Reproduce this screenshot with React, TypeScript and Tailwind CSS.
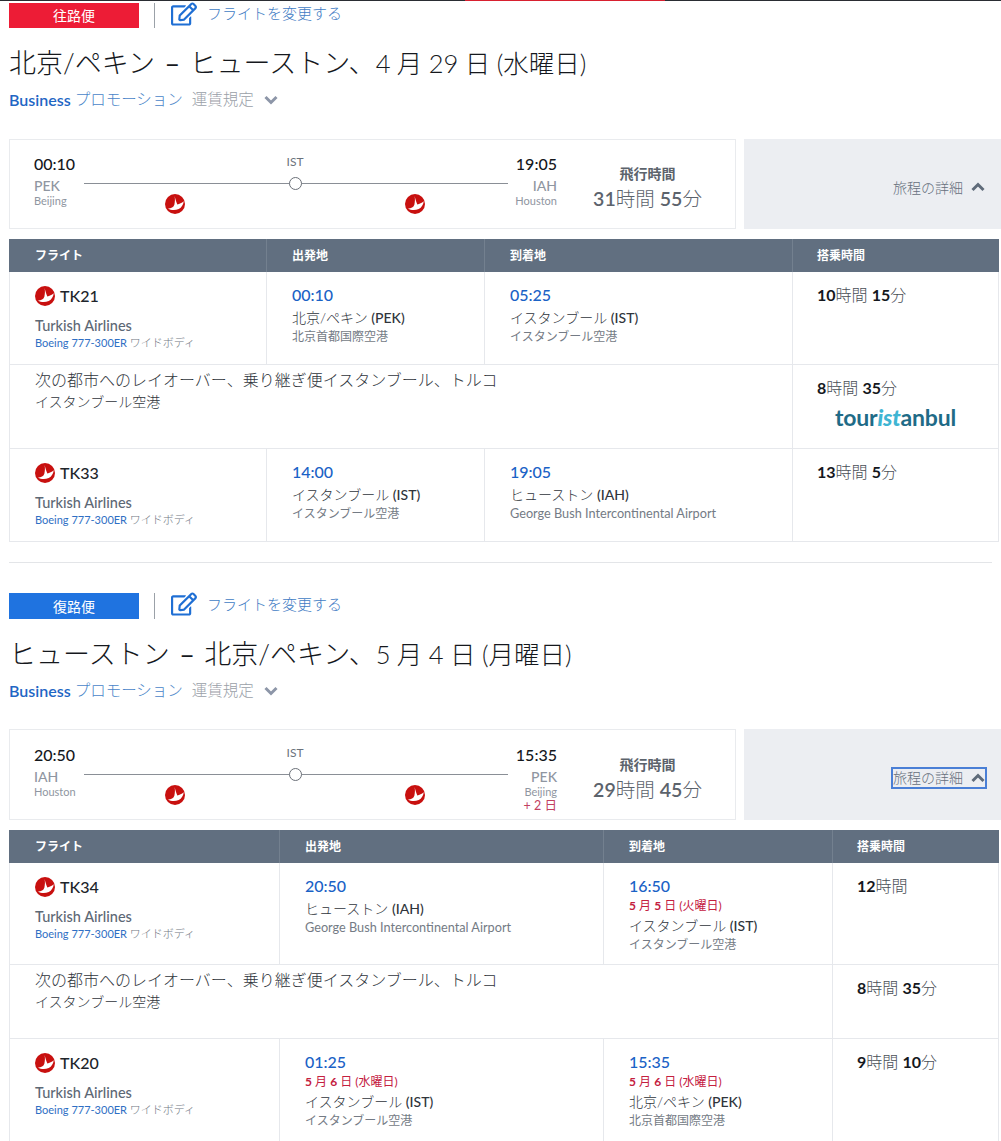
import { FaRegEdit } from "react-icons/fa"

const font = "font-['Lato','Noto_Sans_CJK_JP',sans-serif]"

function TkLogo({ size = "w-5 h-5" }: { size?: string }) {
  return (
    <svg viewBox="0 0 24 24" className={`${size} shrink-0`}>
      <circle cx="12" cy="12" r="12" fill="#c8100f" />
      <path
        d="M11.5 2.5C12.5 6 13.5 10 14.8 12.6 17.5 11.8 20 10.6 22.5 8.6 22 12.6 20 16 16.5 18 12 20 7 19.6 3.6 17.4 7.5 17.4 10.2 15.8 11.2 12.8 12 9.5 12.2 6 11.5 2.5Z"
        fill="#fff"
      />
    </svg>
  )
}

function Chevron({ up, cls }: { up?: boolean; cls: string }) {
  return (
    <svg viewBox="0 0 14 10" className={`w-[14px] h-[10px] shrink-0 ${cls}`} fill="none" stroke="currentColor" strokeWidth="3">
      <polyline points={up ? "1.5,8 7,2.5 12.5,8" : "1.5,2 7,7.5 12.5,2"} />
    </svg>
  )
}

function Duration({ parts }: { parts: [string, string][] }) {
  return (
    <div className="text-[16px] leading-[22px] text-[#4a4f57]">
      {parts.map(([n, u], i) => (
        <span key={i}>
          {i > 0 && " "}
          <b className="font-bold text-[#15181d]">{n}</b>
          <span className="font-light">{u}</span>
        </span>
      ))}
    </div>
  )
}

function FlightInfo({ no }: { no: string }) {
  return (
    <div className="pl-[25px] pt-[13px]">
      <div className="flex items-center gap-[5px] h-[22px]">
        <TkLogo />
        <span className="text-[16px] font-medium text-[#20242a]">{no}</span>
      </div>
      <div className="mt-[10px] text-[14.5px] leading-[17px] font-medium text-[#5d6875]">Turkish Airlines</div>
      <div className="text-[11px] leading-[18px] text-[#2f6fc4]">
        Boeing 777-300ER <span className="text-[#6f7782] font-light">ワイドボディ</span>
      </div>
    </div>
  )
}

type Stop = { time: string; date?: string; city: string; code: string; airport: string; latin?: boolean }

function Place({ time, date, city, code, airport, latin }: Stop) {
  return (
    <div className="pl-[25px] pt-[12px] border-l border-[#e6e8ec]">
      <div className="text-[16px] leading-[22px] font-medium text-[#1a62c6]">{time}</div>
      {date && (
        <div className="text-[12px] leading-[17px] text-[#c4203f]">
          {date.split(/(\d+)/).map((p, i) => (i % 2 ? <b key={i} className="font-bold">{p}</b> : <span key={i}>{p}</span>))}
        </div>
      )}
      <div className="mt-[2px] text-[14px] leading-[20px] text-[#30353c]">
        <span className="font-light">{city}</span> <span className="font-medium">({code})</span>
      </div>
      <div className={`${latin ? "text-[12.7px]" : "text-[12px]"} leading-[17px] text-[#747b85]`}>{airport}</div>
    </div>
  )
}

type Row = { no: string; dep: Stop; arr: Stop; dur: [string, string][] }

function FlightRow({ row, cols, h }: { row: Row; cols: string; h: string }) {
  return (
    <div className={`grid ${cols} ${h} border-x border-b border-[#e6e8ec]`}>
      <FlightInfo no={row.no} />
      <Place {...row.dep} />
      <Place {...row.arr} />
      <div className="pl-[24px] pt-[12px] border-l border-[#e6e8ec]">
        <Duration parts={row.dur} />
      </div>
    </div>
  )
}

function Layover({ cols, h, dur, logo }: { cols: string; h: string; dur: [string, string][]; logo?: boolean }) {
  return (
    <div className={`grid ${cols} ${h} border-x border-b border-[#e6e8ec]`}>
      <div className="col-span-3 pl-[25px] pt-[4px]">
        <div className="text-[16px] leading-[22px] font-light text-[#30353c]">次の都市へのレイオーバー、乗り継ぎ便イスタンブール、トルコ</div>
        <div className="text-[14px] leading-[22px] font-light text-[#30353c]">イスタンブール空港</div>
      </div>
      <div className="pl-[24px] pt-[12px] border-l border-[#e6e8ec]">
        <Duration parts={dur} />
        {logo && (
          <div className="mt-[6px] pl-[18px] text-[23px] leading-[24px] font-bold tracking-[-0.2px] text-[#1f6b87]">
            tour<i className="font-black text-[#3fb5d3]">ist</i>anbul
          </div>
        )}
      </div>
    </div>
  )
}

function Section({
  badge, badgeColor, badgeH, title, from, to, stop, duration, focus, cols, rows, layover, rowH, lastH, layH, plusDay, logo, cardMt, cardH, cardPt,
}: {
  badge: string; badgeColor: string; badgeH: string; title: React.ReactNode
  from: string[]; to: string[]; stop: string; duration: React.ReactNode
  focus?: boolean; cols: string; rows: Row[]; layover: [string, string][]; rowH: string; lastH: string; layH: string; plusDay?: string; logo?: boolean
  cardMt: string; cardH: string; cardPt: string
}) {
  return (
    <section className="px-[9px]">
      <div className={`flex items-center ${badgeH}`}>
        <div className={`w-[130px] h-full flex items-center justify-center text-[14px] text-white ${badgeColor}`}>{badge}</div>
        <div className="ml-[15px] w-[1px] h-full bg-[#9ba1a8]" />
        <FaRegEdit className="ml-[16px] mb-[4px] w-[26px] h-[24px] shrink-0 text-[#1f6fd4]" />
        <span className="ml-[10px] mb-[4px] text-[15px] font-light text-[#3f7cc4]">フライトを変更する</span>
      </div>
      <h2 className="mt-[15px] text-[27px] leading-[40px] font-light text-[#15181d] whitespace-nowrap">{title}</h2>
      <div className="mt-[5px] flex items-center h-[24px] text-[15.5px] font-light">
        <b className="text-[16px] font-semibold text-[#1f66c4]">Business</b>
        <span className="ml-[4px] text-[#4a86c9]">プロモーション</span>
        <span className="ml-[9px] text-[#9aa0a8]">運賃規定</span>
        <Chevron cls="ml-[10px] text-[#8d96a8]" />
      </div>

      <div className={`${cardMt} ${cardH} flex mr-[-9px]`}>
        <div className={`w-[727px] flex border border-[#e9ebee] pl-[24px] ${cardPt}`}>
          <div className="w-[50px]">
            <div className="text-[16px] leading-[22px] font-medium text-[#15181d]">{from[0]}</div>
            <div className="mt-[1px] text-[14px] leading-[20px] font-medium text-[#8f96a1]">{from[1]}</div>
            <div className="-mt-[1px] text-[11px] leading-[12px] text-[#8f96a1]">{from[2]}</div>
          </div>
          <div className="w-[424px] shrink-0 flex flex-col">
            <div className="pr-[2px] text-center text-[12px] leading-[18px] text-[#6b727c]">{stop}</div>
            <div className="relative mt-[12px] h-[1px] bg-[#8a8f96]">
              <span className="absolute left-1/2 top-[-6px] -ml-[7px] w-[13px] h-[13px] rounded-full border border-[#6b7078] bg-white" />
            </div>
            <div className="mt-[10px] pr-[2px] flex justify-center gap-[220px]">
              <TkLogo />
              <TkLogo />
            </div>
          </div>
          <div className="w-[49px] text-right whitespace-nowrap">
            <div className="text-[16px] leading-[22px] font-medium text-[#15181d]">{to[0]}</div>
            <div className="mt-[1px] text-[14px] leading-[20px] font-medium text-[#8f96a1]">{to[1]}</div>
            <div className="-mt-[1px] text-[11px] leading-[12px] text-[#8f96a1]">{to[2]}</div>
            {plusDay && <div className="text-[12.5px] leading-[16px] text-[#c2405f]">{plusDay}</div>}
          </div>
          <div className="flex-1 text-center pt-[9px] pl-[3px]">
            <div className="text-[14px] leading-[24px] font-bold text-[#5c636c]">飛行時間</div>
            <div className="text-[19.5px] leading-[26px] text-[#5c636c]">{duration}</div>
          </div>
        </div>
        <div className="ml-[8px] flex-1 bg-[#eceef2] flex items-center justify-end pr-[16px] pt-[6px]">
          <div className={`flex items-center gap-[8px] h-[18px] text-[14px] font-light text-[#66707d] ${focus ? "outline-2 outline-[#4a7fd6]" : ""}`}>
            旅程の詳細
            <Chevron up cls="text-[#5f6b7a]" />
          </div>
        </div>
      </div>

      <div className="mt-[10px] w-[990px]">
        <div className={`grid ${cols} h-[33px] bg-[#616f80] border-x border-[#616f80] text-[12px] font-bold text-white`}>
          <div className="pl-[25px] pt-[1px] flex items-center">フライト</div>
          <div className="pl-[25px] pt-[1px] flex items-center border-l border-[#73808f]">出発地</div>
          <div className="pl-[25px] pt-[1px] flex items-center border-l border-[#73808f]">到着地</div>
          <div className="pl-[24px] pt-[1px] flex items-center border-l border-[#73808f]">搭乗時間</div>
        </div>
        <FlightRow row={rows[0]} cols={cols} h={rowH} />
        <Layover cols={cols} h={layH} dur={layover} logo={logo} />
        <FlightRow row={rows[1]} cols={cols} h={lastH} />
      </div>
    </section>
  )
}

function Title({ route, date }: { route: string; date: React.ReactNode }) {
  const [a, b] = route.split(" – ")
  return (
    <>
      {a}
      <span className="mx-[9.5px] font-normal">–</span>
      {b}
      <span className="text-[25.5px] [word-spacing:-0.5px]">{date}</span>
    </>
  )
}

const ist = { city: "イスタンブール", code: "IST", airport: "イスタンブール空港" }
const pek = { city: "北京/ペキン", code: "PEK", airport: "北京首都国際空港" }
const iah = { city: "ヒューストン", code: "IAH", airport: "George Bush Intercontinental Airport", latin: true }

const outbound: Row[] = [
  { no: "TK21", dep: { time: "00:10", ...pek }, arr: { time: "05:25", ...ist }, dur: [["10", "時間"], ["15", "分"]] },
  { no: "TK33", dep: { time: "14:00", ...ist }, arr: { time: "19:05", ...iah }, dur: [["13", "時間"], ["5", "分"]] },
]

const inbound: Row[] = [
  { no: "TK34", dep: { time: "20:50", ...iah }, arr: { time: "16:50", date: "5 月 5 日 (火曜日)", ...ist }, dur: [["12", "時間"]] },
  {
    no: "TK20",
    dep: { time: "01:25", date: "5 月 6 日 (水曜日)", ...ist },
    arr: { time: "15:35", date: "5 月 6 日 (水曜日)", ...pek },
    dur: [["9", "時間"], ["10", "分"]],
  },
]

export default function App() {
  return (
    <div className={`${font} w-[1001px] h-[1141px] overflow-hidden bg-white`}>
      <div className="flex h-[1px] bg-[#2a2d33]">
        <div className="ml-[465px] w-[200px] bg-[#d8202f]" />
      </div>
      <div className="h-[2px]" />
      <Section
        badge="往路便"
        badgeColor="bg-[#ed1c36]"
        badgeH="h-[25px]"
        title={<Title route="北京/ペキン – ヒューストン、" date="4 月 29 日 (水曜日)" />}
        from={["00:10", "PEK", "Beijing"]}
        to={["19:05", "IAH", "Houston"]}
        stop="IST"
        duration={<><b className="font-semibold">31</b><span className="font-light">時間</span> <b className="font-semibold">55</b><span className="font-light">分</span></>}
        cols="grid-cols-[256px_218px_308px_1fr]"
        rows={outbound}
        layover={[["8", "時間"], ["35", "分"]]}
        rowH="h-[93px]"
        lastH="h-[93px]"
        layH="h-[84px]"
        cardMt="mt-[27px]"
        cardH="h-[90px]"
        cardPt="pt-[13px]"
        logo
      />
      <div className="mt-[20px] mx-[9px] h-[1px] bg-[#e3e5e8]" />
      <div className="h-[30px]" />
      <Section
        badge="復路便"
        badgeColor="bg-[#1f73e0]"
        badgeH="h-[26px]"
        title={<Title route="ヒューストン – 北京/ペキン、" date="5 月 4 日 (月曜日)" />}
        from={["20:50", "IAH", "Houston"]}
        to={["15:35", "PEK", "Beijing"]}
        stop="IST"
        duration={<><b className="font-semibold">29</b><span className="font-light">時間</span> <b className="font-semibold">45</b><span className="font-light">分</span></>}
        focus
        plusDay="+ 2 日"
        cols="grid-cols-[269px_324px_229px_1fr]"
        rows={inbound}
        layover={[["8", "時間"], ["35", "分"]]}
        rowH="h-[102px]"
        lastH="h-[110px]"
        layH="h-[74px]"
        cardMt="mt-[26px]"
        cardH="h-[91px]"
        cardPt="pt-[14px]"
      />
    </div>
  )
}
